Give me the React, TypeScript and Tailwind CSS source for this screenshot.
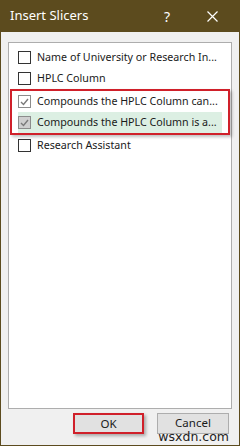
const ITEMS = [
  { label: 'Name of University or Research In...', checked: false, active: false },
  { label: 'HPLC Column', checked: false, active: false },
  { label: 'Compounds the HPLC Column can...', checked: true, active: false },
  { label: 'Compounds the HPLC Column is a...', checked: true, active: true },
  { label: 'Research Assistant', checked: false, active: false },
];

function Check({ checked, active }: { checked: boolean; active: boolean }) {
  return (
    <span
      className={`flex h-[13px] w-[13px] shrink-0 items-center justify-center border ${
        checked ? 'border-[#8c8c8c]' : 'border-[#333333]'
      } ${active ? 'bg-[#cfcfcf]' : 'bg-white'}`}
    >
      {checked && (
        <svg width="9" height="8" viewBox="0 0 9 8" fill="none">
          <path d="M1 4 L3.5 6.5 L8 1" stroke="#7a7a7a" strokeWidth="1.4" />
        </svg>
      )}
    </span>
  );
}

export default function App() {
  return (
    <div
      className="relative flex h-[446px] w-[240px] flex-col overflow-hidden border border-t-0 border-[#5c4b1e] bg-[#f0f0f0] text-[10.7px] text-[#1a1a1a]"
      style={{ fontFamily: '"Noto Sans", "Open Sans", sans-serif' }}
    >
      <div className="flex h-[32px] shrink-0 items-center bg-[#5c4b1e] pl-[9px] text-white">
        <span className="text-[13px]">Insert Slicers</span>
        <span className="ml-auto mr-[37px] text-[14px]">?</span>
        <svg className="mr-[21px]" width="11" height="11" viewBox="0 0 11 11">
          <path d="M0.5 0.5 L10.5 10.5 M10.5 0.5 L0.5 10.5" stroke="white" strokeWidth="1.2" />
        </svg>
      </div>

      <div className="mx-[7px] mt-[10px] flex h-[367px] flex-col border border-[#adadad] bg-white pt-[4px]">
        {ITEMS.slice(0, 2).map((it) => (
          <Row key={it.label} {...it} />
        ))}
        <div className="mx-[1px] border-2 border-[#d0202a] shadow-[2px_2px_3px_rgba(0,0,0,0.25)]">
          {ITEMS.slice(2, 4).map((it) => (
            <Row key={it.label} {...it} inner />
          ))}
        </div>
        <Row {...ITEMS[4]} />
      </div>

      <div className="mt-[4px] flex justify-end gap-[13px] pr-[10px]">
        <button className="flex h-[21px] w-[71px] items-center justify-center border-2 border-[#d0202a] bg-[#e1e1e1] text-[11.5px] shadow-[2px_2px_3px_rgba(0,0,0,0.3)]">
          OK
        </button>
        <button className="flex h-[21px] w-[72px] items-start justify-center border border-[#adadad] bg-[#e1e1e1] text-[11.5px] leading-[17px]">
          Cancel
        </button>
      </div>

      <span
        className="absolute bottom-[1px] right-[9px] px-[1px] text-[12.5px] leading-[14px] text-[#222]"
        style={{ fontFamily: '"DejaVu Sans", sans-serif' }}
      >
        wsxdn.com
      </span>
    </div>
  );
}

function Row({
  label,
  checked,
  active,
  inner,
}: {
  label: string;
  checked: boolean;
  active: boolean;
  inner?: boolean;
}) {
  return (
    <div className={`flex h-[21px] items-center ${inner ? 'px-[6px]' : 'px-[9px]'}`}>
      <div className={`flex h-full flex-1 items-center gap-[6px] ${active ? 'bg-[#dcefe3]' : ''}`}>
        <Check checked={checked} active={active} />
        <span className="whitespace-nowrap">{label}</span>
      </div>
    </div>
  );
}
